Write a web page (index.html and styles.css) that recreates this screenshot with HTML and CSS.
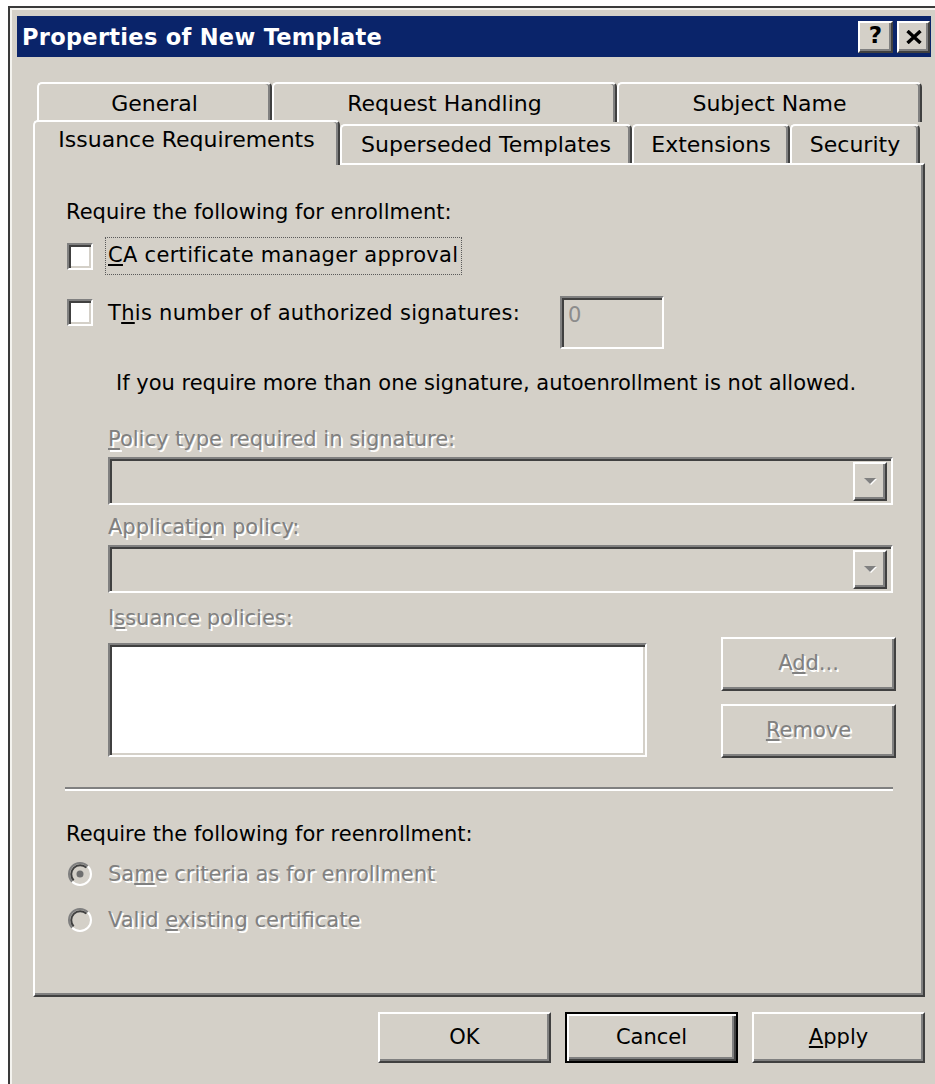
FILE: index.html
```html
<!DOCTYPE html>
<html lang="en">
<head>
<meta charset="utf-8">
<title>Properties of New Template</title>
<link rel="stylesheet" href="styles.css">
</head>
<body>
<div class="window">
  <div class="titlebar">
    <span class="title">Properties of New Template</span>
    <div class="caption-buttons">
      <span class="cap-btn help">?</span>
      <span class="cap-btn close">
        <svg width="16" height="14" viewBox="0 0 16 14" aria-hidden="true">
          <path d="M1.5 1 L14.5 13 M14.5 1 L1.5 13" stroke="#000" stroke-width="3.4" fill="none"/>
        </svg>
      </span>
    </div>
  </div>

  <div class="body">
    <div class="tabs">
      <div class="tab-row back">
        <div class="tab tab-general">General</div>
        <div class="tab tab-request">Request Handling</div>
        <div class="tab tab-subject">Subject Name</div>
      </div>
      <div class="tab-row front">
        <div class="tab tab-issuance selected">Issuance Requirements</div>
        <div class="tab tab-superseded">Superseded Templates</div>
        <div class="tab tab-extensions">Extensions</div>
        <div class="tab tab-security">Security</div>
      </div>
    </div>

    <div class="panel">
      <div class="group-label">Require the following for enrollment:</div>

      <div class="check-row approval">
        <span class="checkbox"></span>
        <span class="check-label focused"><u>C</u>A certificate manager approval</span>
      </div>

      <div class="check-row signatures">
        <span class="checkbox"></span>
        <span class="check-label sig-label">T<u>h</u>is number of authorized signatures:</span>
        <span class="field number-field">0</span>
      </div>

      <div class="note">If you require more than one signature, autoenrollment is not allowed.</div>

      <div class="sub-label disabled policy-label"><u>P</u>olicy type required in signature:</div>
      <div class="combo">
        <span class="drop-btn">
          <svg width="14" height="9" viewBox="0 0 14 9" aria-hidden="true">
            <path d="M2 2 H14 L8 8 Z" fill="#fff"/>
            <path d="M1 1 H13 L7 7 Z" fill="#808080"/>
          </svg>
        </span>
      </div>

      <div class="sub-label disabled app-label">Applicati<u>o</u>n policy:</div>
      <div class="combo">
        <span class="drop-btn">
          <svg width="14" height="9" viewBox="0 0 14 9" aria-hidden="true">
            <path d="M2 2 H14 L8 8 Z" fill="#fff"/>
            <path d="M1 1 H13 L7 7 Z" fill="#808080"/>
          </svg>
        </span>
      </div>

      <div class="sub-label disabled issuance-label">I<u>s</u>suance policies:</div>
      <div class="issuance-row">
        <div class="listbox"></div>
        <div class="side-buttons">
          <button class="btn disabled-btn" type="button" disabled>A<u>d</u>d...</button>
          <button class="btn disabled-btn" type="button" disabled><u>R</u>emove</button>
        </div>
      </div>

      <div class="separator"></div>

      <div class="group-label reenroll">Require the following for reenrollment:</div>

      <div class="radio-row first">
        <svg class="radio" width="24" height="24" viewBox="0 0 24 24" aria-hidden="true">
          <circle cx="12" cy="12" r="10" fill="#d4d0c8"/>
          <path d="M4.22 19.78 A11 11 0 0 1 19.78 4.22" stroke="#808080" stroke-width="2" fill="none"/>
          <path d="M5.64 18.36 A9 9 0 0 1 18.36 5.64" stroke="#404040" stroke-width="2" fill="none"/>
          <path d="M19.78 4.22 A11 11 0 0 1 4.22 19.78" stroke="#fff" stroke-width="2" fill="none"/>
          <circle cx="12" cy="12" r="3.5" fill="#6e6e6e"/>
        </svg>
        <span class="radio-label disabled">Sa<u>m</u>e criteria as for enrollment</span>
      </div>
      <div class="radio-row second">
        <svg class="radio" width="24" height="24" viewBox="0 0 24 24" aria-hidden="true">
          <circle cx="12" cy="12" r="10" fill="#d4d0c8"/>
          <path d="M4.22 19.78 A11 11 0 0 1 19.78 4.22" stroke="#808080" stroke-width="2" fill="none"/>
          <path d="M5.64 18.36 A9 9 0 0 1 18.36 5.64" stroke="#404040" stroke-width="2" fill="none"/>
          <path d="M19.78 4.22 A11 11 0 0 1 4.22 19.78" stroke="#fff" stroke-width="2" fill="none"/>
        </svg>
        <span class="radio-label disabled">Valid <u>e</u>xisting certificate</span>
      </div>
    </div>

    <div class="actions">
      <button class="btn action" type="button">OK</button>
      <button class="btn action default" type="button">Cancel</button>
      <button class="btn action" type="button"><u>A</u>pply</button>
    </div>
  </div>
</div>
</body>
</html>
```

FILE: styles.css
```css
/* Classic 3D dialog, drawn at double scale */
html, body {
  margin: 0;
  background: #fff;
}

body {
  font-family: "DejaVu Sans", "Liberation Sans", sans-serif;
  font-size: 21px;
  color: #000;
}

.window {
  margin: 6px 0 0 8px;
  height: 1078px;
  box-sizing: border-box;
  border-top: 2px solid #3a3a3a;
  border-left: 2px solid #3a3a3a;
  box-shadow: inset 2px 2px 0 #f4f3ef;
  background: #d4d0c8;
  padding: 8px 4px 0 7px;
  overflow: hidden;
}

/* Caption */
.titlebar {
  height: 41px;
  background: #0a246a;
  display: flex;
  align-items: center;
  justify-content: space-between;
  padding: 0 1px 0 5px;
}

.title {
  color: #fff;
  font-weight: bold;
  font-size: 22.5px;
  letter-spacing: 0.3px;
}

.caption-buttons {
  display: flex;
  gap: 4px;
}

.cap-btn {
  box-sizing: border-box;
  height: 32px;
  width: 33px;
  background: #d4d0c8;
  border: 2px solid;
  border-color: #fff #404040 #404040 #fff;
  box-shadow: inset -2px -2px 0 #808080;
  display: flex;
  align-items: center;
  justify-content: center;
  font-weight: bold;
  font-size: 23px;
  line-height: 1;
}

.cap-btn.help {
  width: 35px;
  padding-bottom: 2px;
}

/* Body */
.body {
  padding: 25px 6px 0 16px;
}

/* Tabs */
.tab-row {
  display: flex;
  font-size: 22px;
}

.tab-row.back {
  height: 40px;
  padding-left: 4px;
}

.tab-row.front {
  height: 41px;
}

.tab {
  box-sizing: border-box;
  height: 40px;
  background: #d4d0c8;
  border-top: 2px solid #fff;
  border-left: 2px solid #fff;
  border-right: 2px solid #404040;
  box-shadow: inset -2px 0 0 #808080;
  border-radius: 5px 5px 0 0;
  display: flex;
  align-items: center;
  justify-content: center;
  white-space: nowrap;
}

.tab-row.front .tab {
  height: 39px;
  margin-top: 2px;
}

.tab-row.front .tab.selected {
  position: relative;
  z-index: 2;
  height: 45px;
  margin-top: -2px;
  padding-bottom: 8px;
}

.tab-general { width: 235px; }
.tab-request { width: 345px; }
.tab-subject { width: 305px; }
.tab-issuance { width: 307px; }
.tab-superseded { width: 292px; }
.tab-extensions { width: 158px; }
.tab-security { width: 130px; }

/* Property page */
.panel {
  position: relative;
  box-sizing: border-box;
  height: 834px;
  border: 2px solid;
  border-color: #fff #404040 #404040 #fff;
  box-shadow: inset -2px -2px 0 #808080;
  padding: 34px 30px 0 31px;
}

.group-label {
  line-height: 26px;
}

.checkbox {
  flex: none;
  box-sizing: border-box;
  width: 26px;
  height: 27px;
  background: #fff;
  border: 2px solid;
  border-color: #808080 #fff #fff #808080;
  box-shadow: inset 2px 2px 0 #404040, inset -2px -2px 0 #d4d0c8;
  margin-left: 1px;
}

.check-row {
  display: flex;
}

.check-row.approval {
  align-items: center;
  height: 38px;
  margin-top: 12px;
}

.check-label {
  line-height: 26px;
  white-space: nowrap;
  letter-spacing: 0.3px;
}

.check-label.focused {
  box-sizing: border-box;
  height: 38px;
  line-height: 35px;
  margin-left: 12px;
  padding: 0 3px 0 2px;
  border: 1.5px dotted #5a5a5a;
}

.check-row.signatures {
  align-items: flex-start;
  margin-top: 19px;
}

.check-row.signatures .checkbox {
  margin-top: 5px;
}

.sig-label {
  width: 452px;
  margin-left: 15px;
  margin-top: 6px;
}

.field {
  box-sizing: border-box;
  border: 2px solid;
  border-color: #808080 #fff #fff #808080;
  box-shadow: inset 2px 2px 0 #404040, inset -2px -2px 0 #d4d0c8;
}

.number-field {
  width: 104px;
  height: 53px;
  margin-top: 2px;
  padding: 5px 6px;
  line-height: 24px;
  color: #8c8c8c;
}

.note {
  line-height: 26px;
  margin-top: 21px;
  padding-left: 50px;
}

.disabled {
  color: #808080;
  text-shadow: 2px 2px 0 #fff;
}

.sub-label {
  line-height: 26px;
  margin-left: 42px;
}

.policy-label { margin-top: 30px; }
.app-label { margin-top: 9px; }
.issuance-label { margin-top: 12px; }

.combo {
  box-sizing: border-box;
  height: 48px;
  margin: 5px 0 0 42px;
  border: 2px solid;
  border-color: #808080 #fff #fff #808080;
  box-shadow: inset 2px 2px 0 #404040, inset -2px -2px 0 #d4d0c8;
  display: flex;
  justify-content: flex-end;
  align-items: center;
  padding-right: 4px;
}

.drop-btn {
  box-sizing: border-box;
  width: 34px;
  height: 39px;
  border: 2px solid;
  border-color: #fff #404040 #404040 #fff;
  box-shadow: inset -2px -2px 0 #808080;
  display: flex;
  align-items: center;
  justify-content: center;
}

.issuance-row {
  display: flex;
  align-items: flex-start;
  margin: 6px -3px 0 42px;
}

.listbox {
  box-sizing: border-box;
  width: 539px;
  height: 114px;
  margin-top: 6px;
  background: #fff;
  border: 2px solid;
  border-color: #808080 #fff #fff #808080;
  box-shadow: inset 2px 2px 0 #404040, inset -2px -2px 0 #d4d0c8;
}

.side-buttons {
  margin-left: auto;
  display: flex;
  flex-direction: column;
  gap: 13px;
}

.btn {
  box-sizing: border-box;
  font: inherit;
  color: #000;
  background: #d4d0c8;
  border: 2px solid;
  border-color: #fff #404040 #404040 #fff;
  box-shadow: inset -2px -2px 0 #808080;
  padding: 0 0 2px;
  margin: 0;
}

.disabled-btn {
  width: 175px;
  height: 54px;
  color: #808080;
  text-shadow: 2px 2px 0 #fff;
}

.separator {
  height: 2px;
  margin: 29px 0 0 -1px;
  background: #808080;
  border-bottom: 2px solid #fff;
}

.group-label.reenroll {
  margin-top: 30px;
}

.radio-row {
  display: flex;
  align-items: center;
  height: 34px;
}

.radio-row.first { margin-top: 10px; }
.radio-row.second { margin-top: 12px; }

.radio {
  flex: none;
  margin-left: 2px;
}

.radio-label {
  margin-left: 16px;
  line-height: 26px;
}

/* Dialog buttons */
.actions {
  display: flex;
  justify-content: flex-end;
  gap: 14px;
  margin-top: 15px;
}

.btn.action {
  width: 173px;
  height: 51px;
}

.btn.action.default {
  border: 2px solid #000;
  box-shadow: inset 2px 2px 0 #fff, inset -2px -2px 0 #404040, inset -4px -4px 0 #808080;
}
```
